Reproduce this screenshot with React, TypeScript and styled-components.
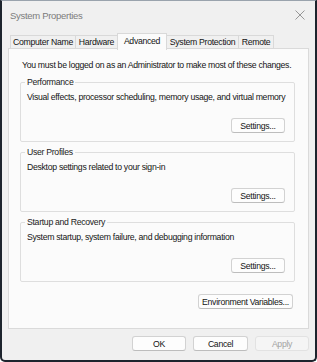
import React from 'react';
import styled, { createGlobalStyle } from 'styled-components';

const GlobalStyle = createGlobalStyle`
  html, body {
    margin: 0;
    padding: 0;
    background: #ffffff;
  }
  body {
    font-family: "Liberation Sans", Arial, sans-serif;
    font-size: 8.7px;
    letter-spacing: -0.3px;
    color: #141414;
  }
`;

const Window = styled.div`
  width: 317px;
  height: 362px;
  box-sizing: border-box;
  background: #f0f0f0;
  border: 2px solid #1d242d;
  border-top: 1px solid #9aa3ad;
  border-radius: 0 0 5px 5px;
  display: flex;
  flex-direction: column;
  overflow: hidden;
`;

const TitleBar = styled.div`
  height: 27px;
  display: flex;
  align-items: center;
  justify-content: space-between;
  padding: 1px 8px 0 8px;
  box-sizing: border-box;
`;

const Title = styled.span`
  font-size: 9.5px;
  color: #7c7c7c;
`;

const CloseButton = styled.div`
  width: 12px;
  height: 12px;
  display: flex;
  align-items: center;
  justify-content: center;
  margin-right: 1px;
`;

const TabStrip = styled.div`
  display: flex;
  align-items: flex-end;
  height: 21px;
  margin: 0 0 0 8px;
  position: relative;
  z-index: 1;
`;

const Tab = styled.div<{ $w: number; $active?: boolean }>`
  width: ${(p) => p.$w}px;
  height: ${(p) => (p.$active ? 17 : 14)}px;
  box-sizing: border-box;
  display: flex;
  align-items: center;
  justify-content: center;
  border: 1px solid #d9d9d9;
  border-bottom: ${(p) => (p.$active ? 'none' : '1px solid #d9d9d9')};
  margin-right: -1px;
  margin-bottom: ${(p) => (p.$active ? -1 : 0)}px;
  background: ${(p) => (p.$active ? '#fbfbfb' : '#f0f0f0')};
  padding-bottom: ${(p) => (p.$active ? 2 : 0)}px;
  white-space: nowrap;
`;

const Panel = styled.div`
  margin: -1px 6px 0 6px;
  height: 281px;
  box-sizing: border-box;
  background: #fbfbfb;
  border: 1px solid #dadada;
  padding: 10px 13px 0 11px;
  display: flex;
  flex-direction: column;
`;

const Intro = styled.div`
  line-height: 12px;
  padding-left: 2px;
  white-space: nowrap;
`;

const Group = styled.fieldset`
  margin: 5px 0 0 0;
  min-width: 0;
  padding: 0 9px 8px 4px;
  border: 1px solid #dedede;
  border-radius: 2px;
  display: flex;
  flex-direction: column;
  & + & {
    margin-top: 4px;
  }
`;

const Legend = styled.legend`
  padding: 0 2px;
  line-height: 12px;
  color: #222;
`;

const Description = styled.div`
  margin-top: 3px;
  padding-left: 2px;
  line-height: 12px;
  white-space: nowrap;
`;

const Button = styled.button<{ $w: number }>`
  width: ${(p) => p.$w}px;
  height: 15px;
  box-sizing: border-box;
  padding: 0;
  font-family: inherit;
  font-size: 8.7px;
  letter-spacing: -0.3px;
  white-space: nowrap;
  color: ${(p) => (p.disabled ? '#a3a3a3' : '#141414')};
  background: ${(p) => (p.disabled ? '#f5f5f5' : '#fdfdfd')};
  border: 1px solid ${(p) => (p.disabled ? '#e2e2e2' : '#d2d2d2')};
  border-bottom-color: ${(p) => (p.disabled ? '#e2e2e2' : '#bdbdbd')};
  border-radius: 3px;
`;

const GroupButton = styled(Button)`
  align-self: flex-end;
  margin-top: 15px;
`;

const EnvRow = styled.div`
  display: flex;
  justify-content: flex-end;
  margin-top: 12px;
  padding-right: 2px;
`;

const Footer = styled.div`
  display: flex;
  justify-content: flex-end;
  gap: 7px;
  padding: 7px 6px 0 0;
`;

const groups = [
  { title: 'Performance', text: 'Visual effects, processor scheduling, memory usage, and virtual memory' },
  { title: 'User Profiles', text: 'Desktop settings related to your sign-in' },
  { title: 'Startup and Recovery', text: 'System startup, system failure, and debugging information' },
];

const tabs = [
  { label: 'Computer Name', w: 66 },
  { label: 'Hardware', w: 43 },
  { label: 'Advanced', w: 50, active: true },
  { label: 'System Protection', w: 73 },
  { label: 'Remote', w: 36 },
];

export default function App() {
  return (
    <>
      <GlobalStyle />
      <Window>
        <TitleBar>
          <Title>System Properties</Title>
          <CloseButton>
            <svg width="10" height="10" viewBox="0 0 10 10">
              <path d="M0.5 0.5 L9.5 9.5 M9.5 0.5 L0.5 9.5" stroke="#8c8c8c" strokeWidth="0.9" fill="none" />
            </svg>
          </CloseButton>
        </TitleBar>
        <TabStrip>
          {tabs.map((t) => (
            <Tab key={t.label} $w={t.w} $active={t.active}>
              {t.label}
            </Tab>
          ))}
        </TabStrip>
        <Panel>
          <Intro>You must be logged on as an Administrator to make most of these changes.</Intro>
          {groups.map((g) => (
            <Group key={g.title}>
              <Legend>{g.title}</Legend>
              <Description>{g.text}</Description>
              <GroupButton $w={54}>Settings...</GroupButton>
            </Group>
          ))}
          <EnvRow>
            <Button $w={95}>Environment Variables...</Button>
          </EnvRow>
        </Panel>
        <Footer>
          <Button $w={54}>OK</Button>
          <Button $w={55}>Cancel</Button>
          <Button $w={54} disabled>
            Apply
          </Button>
        </Footer>
      </Window>
    </>
  );
}
